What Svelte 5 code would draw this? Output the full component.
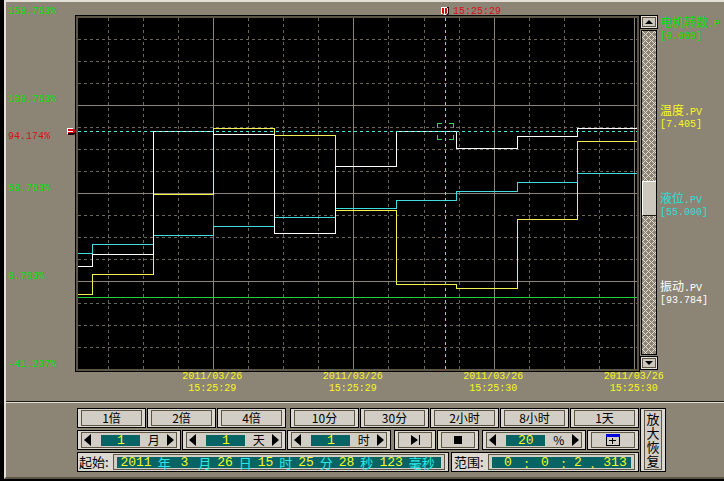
<script lang="ts">
  type Series = { name: string; suffix: string; value: string; color: string; line: string; levels: number[] };

  const width = 559;
  const height = 351;
  const cursor = { x: 367, y: 113, time: '15:25:29', value: '94.174%' };
  const steps = [14, 75, 135, 196, 257, 318, 378, 439, 499];

  const series: Series[] = [
    { name: '电机转数', suffix: '.P', value: '0.000', color: '#00e400', line: '#20d038', levels: [279] },
    { name: '温度', suffix: '.PV', value: '7.405', color: '#f8f820', line: '#f4f050', levels: [276, 256, 176, 110, 117, 192, 266, 270, 201, 123] },
    { name: '液位', suffix: '.PV', value: '55.000', color: '#28e0d8', line: '#40dce0', levels: [235, 226, 217, 208, 199, 190, 182, 173, 164, 155] },
    { name: '振动', suffix: '.PV', value: '93.784', color: '#ffffff', line: '#ffffff', levels: [248, 236, 113, 116, 215, 148, 113, 130, 118, 110] }
  ];

  const yLabels = ['158.763%', '108.763%', '58.763%', '8.763%', '-41.237%'];
  const xLabels = [
    { date: '2011/03/26', time: '15:25:29' },
    { date: '2011/03/26', time: '15:25:29' },
    { date: '2011/03/26', time: '15:25:30' },
    { date: '2011/03/26', time: '15:25:30' }
  ];

  const columns = Array.from({ length: 16 }, (_, i) => 30.5 + Math.round(i * 35.06));
  const rows = Array.from({ length: 15 }, (_, i) => 21.5 + i * 22);

  const zooms = ['1倍', '2倍', '4倍'];
  const spans = ['10分', '30分', '2小时', '8小时', '1天'];
  const shifts = [
    { value: '1', unit: '月' },
    { value: '1', unit: '天' },
    { value: '1', unit: '时' }
  ];
  const startParts = [
    { value: '2011', unit: '年', size: 'four' },
    { value: '3', unit: '月', size: 'two' },
    { value: '26', unit: '日', size: 'two' },
    { value: '15', unit: '时', size: 'two' },
    { value: '25', unit: '分', size: 'two' },
    { value: '28', unit: '秒', size: 'two' },
    { value: '123', unit: '毫秒', size: 'three' }
  ];
  const rangeParts = [
    { value: '0', sep: ':', size: 'two' },
    { value: '0', sep: ':', size: 'two' },
    { value: '2', sep: '.', size: 'one' },
    { value: '313', sep: '', size: 'three' }
  ];

  let scroll = $state(52);

  function stepPath(levels: number[]): string {
    let d = `M 0 ${levels[0] + 0.5}`;
    for (let i = 1; i < levels.length; i++) {
      d += ` H ${steps[i - 1] + 0.5} V ${levels[i] + 0.5}`;
    }
    return `${d} H ${width}`;
  }
</script>

{#snippet spinner(value: string, unit: string)}
  <div class="box spinner">
    <div class="face">
      <button class="arrow" aria-label="减少 {unit}">
        <svg width="7" height="12" viewBox="0 0 7 12"><path d="M7 0V12L0 6Z" /></svg>
      </button>
      <input class="field" aria-label={unit} {value} />
      <span class="unit">{unit}</span>
      <button class="arrow" aria-label="增加 {unit}">
        <svg width="7" height="12" viewBox="0 0 7 12"><path d="M0 0V12L7 6Z" /></svg>
      </button>
    </div>
  </div>
{/snippet}

<main>
  <section class="trend">
    <div class="y-axis">
      {#each yLabels as label}
        <span>{label}</span>
      {/each}
    </div>

    <div class="chart">
      <div class="plot">
        <svg class="canvas" viewBox="0 0 {width} {height}" preserveAspectRatio="none">
          <!-- Grid lines -->
          {#each columns as x, i}
            <line x1={x} y1="0" x2={x} y2={height} class={i % 4 === 3 ? 'major' : 'minor'} />
          {/each}
          {#each rows as y, i}
            <line x1="0" y1={y} x2={width} y2={y} class={i % 4 === 3 ? 'major' : 'minor'} />
          {/each}

          <!-- Data lines -->
          {#each series as s}
            <path d={stepPath(s.levels)} fill="none" stroke={s.line} />
          {/each}

          <!-- Cursor -->
          <line x1={cursor.x + 0.5} y1="0" x2={cursor.x + 0.5} y2={height} class="cursor" />
          <line x1="0" y1={cursor.y + 0.5} x2={width} y2={cursor.y + 0.5} class="cursor" />
          <path
            class="target"
            d="M359.5 110V105.5H364M371 105.5H375.5V110M375.5 117V121.5H371M364 121.5H359.5V117"
          />
        </svg>

        <div class="time-mark" style="left: {(cursor.x / width) * 100}%">
          <svg width="8" height="9" viewBox="0 0 8 9">
            <path d="M1 0H8V7L6 9H3L1 7Z" fill="#200000" />
            <path d="M0 0H6V1H7V6L5 8H3L1 7H0Z" fill="#fff" />
            <path d="M1 1H3V7H2L1 6ZM4 1H6V6L5 7H4Z" fill="#e00010" />
          </svg>
          <span>{cursor.time}</span>
        </div>
        <svg class="value-mark" style="top: {(cursor.y / height) * 100}%" width="9" height="7" viewBox="0 0 9 7">
          <path d="M1 1H7L9 3V4L7 7H1Z" fill="#200000" />
          <path d="M0 0H6V1H1V3H6V4H1V6H0Z" fill="#fff" />
          <path d="M1 1H7L9 3L7 5H1V4H6V3H1Z" fill="#e00010" />
        </svg>
        <span class="cursor-value" style="top: {(cursor.y / height) * 100}%">{cursor.value}</span>
      </div>
    </div>

    <div class="scroll">
      <button class="scroll-button" aria-label="向上">
        <svg width="8" height="4" viewBox="0 0 8 4"><path d="M4 0L8 4H0Z" /></svg>
      </button>
      <input type="range" aria-label="纵向滚动" min="0" max="100" bind:value={scroll} />
      <button class="scroll-button" aria-label="向下">
        <svg width="8" height="4" viewBox="0 0 8 4"><path d="M0 0H8L4 4Z" /></svg>
      </button>
    </div>

    <div class="legend">
      {#each series as s}
        <div class="legend-item" style="color: {s.color}">
          <div><span class="tag">{s.name}</span>{s.suffix}</div>
          <div>[{s.value}]</div>
        </div>
      {/each}
    </div>

    <div class="x-axis">
      {#each xLabels as label}
        <div>{label.date}<br />{label.time}</div>
      {/each}
    </div>
  </section>

  <section class="panel">
    <div class="rows">
      <div class="row">
        <div class="group zooms">
          {#each zooms as label}
            <button class="box"><span class="face">{label}</span></button>
          {/each}
        </div>
        <div class="group spans">
          {#each spans as label}
            <button class="box"><span class="face">{label}</span></button>
          {/each}
        </div>
      </div>

      <div class="row shifts">
        <div class="group triple">
          {#each shifts as s}
            {@render spinner(s.value, s.unit)}
          {/each}
        </div>
        <div class="group pair">
          <button class="box" aria-label="到最新">
            <span class="face">
              <svg width="9" height="10" viewBox="0 0 9 10"><path d="M0 0L7 5L0 10ZM8 0H9V10H8Z" /></svg>
            </span>
          </button>
          <button class="box" aria-label="停止">
            <span class="face">
              <svg width="8" height="8" viewBox="0 0 8 8"><path d="M0 0H8V8H0Z" /></svg>
            </span>
          </button>
        </div>
        <div class="group percent">
          {@render spinner('20', '%')}
          <button class="box window" aria-label="添加窗口">
            <span class="face">
              <svg width="14" height="12" viewBox="0 0 14 12">
                <path d="M0 0H14V12H0Z" />
                <path d="M0 0H14V3H0Z" fill="#0000e0" />
                <path d="M1 3H13V11H1Z" fill="#d2cec6" />
                <path d="M6 4H7V6H10V7H7V10H6V7H3V6H6Z" />
              </svg>
            </span>
          </button>
        </div>
      </div>

      <div class="row times">
        <div class="box start" role="group" aria-labelledby="start-label">
          <span class="caption" id="start-label">起始:</span>
          <div class="face">
            <div class="strip">
              {#each startParts as part}
                <input class={part.size} aria-label={part.unit} value={part.value} />
                <span>{part.unit}</span>
              {/each}
            </div>
          </div>
        </div>
        <div class="box range" role="group" aria-labelledby="range-label">
          <span class="caption" id="range-label">范围:</span>
          <div class="face">
            <div class="strip">
              {#each rangeParts as part, i}
                <input class={part.size} aria-label="范围 {i + 1}" value={part.value} />
                {#if part.sep}<span class="sep">{part.sep}</span>{/if}
              {/each}
            </div>
          </div>
        </div>
      </div>
    </div>

    <button class="box restore"><span class="face">放大恢复</span></button>
  </section>
</main>

<style>
  :global(body) {
    margin: 0;
    background: #000;
  }

  main {
    margin-left: 4px;
    border-top: 2px solid #e4e0d8;
    border-left: 2px solid #e4e0d8;
    border-bottom: 2px solid #5c5444;
    background: #8c8474;
    font: 10px/12px 'Liberation Mono', 'Noto Sans CJK SC', monospace;
  }

  button,
  input {
    margin: 0;
    padding: 0;
    border: 0;
    border-radius: 0;
    font: inherit;
    color: inherit;
    background: none;
  }

  svg {
    display: block;
  }

  .trend {
    display: grid;
    grid-template-columns: 69px 1fr 18px 66px;
    padding-bottom: 6px;
    border-bottom: 1px solid #1c1812;
    white-space: nowrap;
  }

  .y-axis {
    display: flex;
    flex-direction: column;
    justify-content: space-between;
    padding: 4px 0 1px 2px;
    color: #08e008;
  }

  .chart {
    padding-top: 13px;
  }

  .plot {
    position: relative;
    border: 2px solid #5c5444;
    outline: 1px solid #000;
    margin: 1px;
    background: #000;
  }

  .canvas {
    width: 100%;
    height: 351px;
    shape-rendering: crispEdges;
  }

  .canvas line,
  .canvas path {
    stroke-width: 1;
    vector-effect: non-scaling-stroke;
  }

  .major {
    stroke: #8c8474;
  }

  .minor {
    stroke: #6c6658;
    stroke-dasharray: 3 3;
  }

  .cursor {
    stroke: #40f0e0;
    stroke-dasharray: 3 3;
  }

  .target {
    fill: none;
    stroke: #30d850;
  }

  .time-mark {
    position: absolute;
    top: -11px;
    display: flex;
    gap: 4px;
    margin-left: -4px;
    color: #d81018;
    line-height: 9px;
  }

  .value-mark {
    position: absolute;
    left: -11px;
    margin-top: -3px;
  }

  .cursor-value {
    position: absolute;
    right: 100%;
    width: 70px;
    color: #d81018;
  }

  .scroll {
    display: flex;
    flex-direction: column;
    padding-top: 13px;
    height: 355px;
  }

  .scroll-button {
    display: grid;
    place-items: center;
    flex: none;
    height: 14px;
    border: 1px solid #000;
    box-shadow: inset 0 0 0 1px #e4e0d8, inset 0 0 0 2px #5c5444;
    background: #cdc8be;
  }

  .scroll input {
    appearance: none;
    writing-mode: vertical-lr;
    flex: 1;
    min-height: 0;
    width: 16px;
    margin: 1px;
    box-sizing: border-box;
    border: 1px solid #000;
    /* 6px lattice */
    background: #8c8474
      url("data:image/svg+xml,%3Csvg xmlns='http://www.w3.org/2000/svg' width='6' height='6' shape-rendering='crispEdges'%3E%3Cpath fill='%23e4e0d8' d='M0 0h1v1h-1zM1 1h1v1h-1zM2 2h1v1h-1zM3 3h1v1h-1zM4 4h1v1h-1zM5 5h1v1h-1zM5 1h1v1h-1zM4 2h1v1h-1zM2 4h1v1h-1zM1 5h1v1h-1z'/%3E%3C/svg%3E");
  }

  .scroll input::-webkit-slider-thumb {
    appearance: none;
    width: 14px;
    height: 35px;
    border-top: 1px solid #fff;
    border-left: 1px solid #fff;
    border-bottom: 1px solid #1c1812;
    box-sizing: border-box;
    background: #cdc8be;
  }

  .legend {
    padding: 14px 0 0 2px;
    overflow: hidden;
  }

  .legend-item {
    height: 88px;
  }

  .legend-item:last-child {
    height: 24px;
  }

  .tag {
    font-family: 'Noto Sans CJK SC', sans-serif;
    font-size: 12px;
    line-height: 12px;
  }

  .x-axis {
    grid-column: 1 / -1;
    display: grid;
    grid-template-columns: repeat(4, 1fr);
    margin-top: -1px;
    padding: 0 20px 0 136px;
    text-align: center;
    color: #f8f820;
  }

  .panel {
    display: flex;
    gap: 1px;
    padding: 5px 58px 5px 71px;
    border-top: 1px solid #e4e0d8;
    color: #000;
  }

  .rows {
    flex: 1;
    display: flex;
    flex-direction: column;
    gap: 2px;
    min-width: 0;
  }

  .row {
    display: flex;
    gap: 4px;
  }

  .shifts {
    gap: 3px;
  }

  .times {
    gap: 2px;
  }

  .group {
    display: flex;
    gap: 1px;
    min-width: 0;
  }

  .zooms {
    flex: 209;
  }

  .spans {
    flex: 349;
  }

  .triple {
    flex: 314;
  }

  .pair {
    flex: 85;
  }

  .percent {
    flex: 157;
  }

  .box {
    flex: 1 1 0;
    display: flex;
    box-sizing: border-box;
    min-width: 0;
    height: 20px;
    padding: 1px 3px;
    border: 1px solid #000;
    background: #dcd8d0;
  }

  .percent .spinner {
    flex: 2 2 104px;
  }

  .percent .window {
    flex: 1 1 52px;
  }

  .face {
    flex: 1;
    display: flex;
    align-items: center;
    justify-content: center;
    box-sizing: border-box;
    min-width: 0;
    height: 16px;
    border: 1px solid #5c5444;
    background: #d2cec6;
    font: 12px/14px 'Noto Sans CJK SC', sans-serif;
  }

  .spinner .face {
    justify-content: space-between;
    padding: 0 2px;
  }

  .arrow {
    display: grid;
    place-items: center;
    flex: none;
    width: 7px;
    height: 14px;
  }

  .field {
    width: 39px;
    height: 11px;
    margin-left: 4px;
    background: #086464;
    color: #f8f820;
    font: 13px/11px 'Liberation Mono', monospace;
    text-align: center;
  }

  .unit {
    width: 14px;
    text-align: center;
  }

  .start {
    flex: 2 2 372px;
    padding-left: 1px;
  }

  .range {
    flex: 1 1 188px;
    padding-left: 2px;
  }

  .caption {
    width: 34px;
    font: 13px/16px 'Noto Sans CJK SC', sans-serif;
    white-space: nowrap;
  }

  .times .face {
    padding: 0 3px;
  }

  .strip {
    flex: 1;
    display: flex;
    align-items: center;
    justify-content: space-between;
    height: 11px;
    padding: 0 6px 0 3px;
    background: #086464;
    color: #28e8e8;
    font: 13px/11px 'Noto Sans CJK SC', sans-serif;
  }

  .range .strip {
    padding: 0 4px 0 8px;
  }

  .strip input {
    height: 11px;
    color: #f8f820;
    font: 13px/11px 'Liberation Mono', monospace;
    text-align: center;
  }

  .strip .one {
    width: 8px;
  }

  .strip .two {
    width: 16px;
  }

  .strip .three {
    width: 24px;
  }

  .strip .four {
    width: 32px;
  }

  .sep {
    width: 8px;
    color: #f8f820;
    text-align: center;
  }

  .restore {
    flex: 0 0 26px;
    height: 64px;
  }

  .restore .face {
    height: 60px;
    font-size: 13px;
    white-space: normal;
    word-break: break-all;
  }
</style>
